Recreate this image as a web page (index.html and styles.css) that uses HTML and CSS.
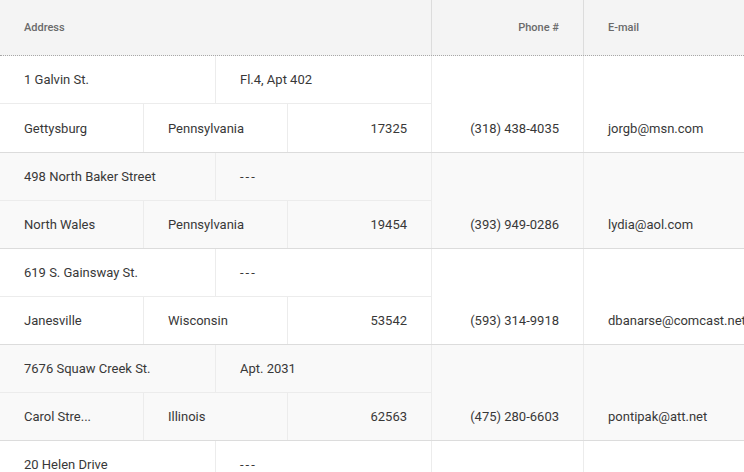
FILE: index.html
```html
<!DOCTYPE html>
<html lang="en">
<head>
    <meta charset="UTF-8">
    <meta name="viewport" content="width=device-width, initial-scale=1.0">
    <title>Contacts</title>
    <link rel="stylesheet" href="styles.css">
</head>
<body>
    <div class="grid">
        <div class="grid-head">
            <div class="hcell">Address</div>
            <div class="hcell right">Phone #</div>
            <div class="hcell">E-mail</div>
        </div>

        <div class="record">
            <div class="address">
                <div class="line-one">
                    <div class="cell">1 Galvin St.</div>
                    <div class="cell">Fl.4, Apt 402</div>
                </div>
                <div class="line-two">
                    <div class="cell">Gettysburg</div>
                    <div class="cell">Pennsylvania</div>
                    <div class="cell right">17325</div>
                </div>
            </div>
            <div class="cell phone">(318) 438-4035</div>
            <div class="cell email">jorgb@msn.com</div>
        </div>

        <div class="record alt">
            <div class="address">
                <div class="line-one">
                    <div class="cell">498 North Baker Street</div>
                    <div class="cell empty">---</div>
                </div>
                <div class="line-two">
                    <div class="cell">North Wales</div>
                    <div class="cell">Pennsylvania</div>
                    <div class="cell right">19454</div>
                </div>
            </div>
            <div class="cell phone">(393) 949-0286</div>
            <div class="cell email">lydia@aol.com</div>
        </div>

        <div class="record">
            <div class="address">
                <div class="line-one">
                    <div class="cell">619 S. Gainsway St.</div>
                    <div class="cell empty">---</div>
                </div>
                <div class="line-two">
                    <div class="cell">Janesville</div>
                    <div class="cell">Wisconsin</div>
                    <div class="cell right">53542</div>
                </div>
            </div>
            <div class="cell phone">(593) 314-9918</div>
            <div class="cell email">dbanarse@comcast.net</div>
        </div>

        <div class="record alt">
            <div class="address">
                <div class="line-one">
                    <div class="cell">7676 Squaw Creek St.</div>
                    <div class="cell">Apt. 2031</div>
                </div>
                <div class="line-two">
                    <div class="cell">Carol Stre...</div>
                    <div class="cell">Illinois</div>
                    <div class="cell right">62563</div>
                </div>
            </div>
            <div class="cell phone">(475) 280-6603</div>
            <div class="cell email">pontipak@att.net</div>
        </div>

        <div class="record">
            <div class="address">
                <div class="line-one">
                    <div class="cell">20 Helen Drive</div>
                    <div class="cell empty">---</div>
                </div>
                <div class="line-two">
                    <div class="cell">Tonawanda</div>
                    <div class="cell">New York</div>
                    <div class="cell right">14150</div>
                </div>
            </div>
            <div class="cell phone">(716) 555-0192</div>
            <div class="cell email">helen@yahoo.com</div>
        </div>
    </div>
</body>
</html>
```

FILE: styles.css
```css
body {
    margin: 0;
    padding: 0;
    font-family: Roboto, "Liberation Sans", sans-serif;
    font-size: 13px;
    color: #383838;
    background-color: #fff;
    overflow: hidden;
}
.grid {
    width: 820px;
}
.grid-head {
    display: grid;
    grid-template-columns: 431px 152px 1fr;
    height: 56px;
    box-sizing: border-box;
    background-color: #f4f4f4;
    border-bottom: 1px dotted #a8a8a8;
}
.hcell {
    display: flex;
    align-items: center;
    padding: 0 24px;
    font-size: 11px;
    font-weight: 500;
    color: #6a6a6a;
}
.hcell + .hcell {
    border-left: 1px solid #dcdcdc;
}
.hcell.right {
    justify-content: flex-end;
}
.record {
    display: grid;
    grid-template-columns: 431px 152px 1fr;
    height: 96px;
    box-sizing: border-box;
}
.record + .record {
    border-top: 1px solid #dcdcdc;
}
.record.alt {
    background-color: #f9f9f9;
}
.address {
    display: grid;
    grid-template-rows: 48px 1fr;
}
.line-one {
    display: grid;
    grid-template-columns: 215px 1fr;
    border-bottom: 1px solid #ececec;
}
.line-two {
    display: grid;
    grid-template-columns: 143px 144px 1fr;
}
.cell {
    display: flex;
    align-items: center;
    padding: 0 24px;
    white-space: nowrap;
    overflow: hidden;
}
.line-one .cell + .cell,
.line-two .cell + .cell {
    border-left: 1px solid #ececec;
}
.cell.right {
    justify-content: flex-end;
}
.cell.empty {
    letter-spacing: 2px;
}
.phone,
.email {
    align-items: flex-end;
    padding-bottom: 16px;
    border-left: 1px solid #ececec;
}
.phone {
    justify-content: flex-end;
}
```
